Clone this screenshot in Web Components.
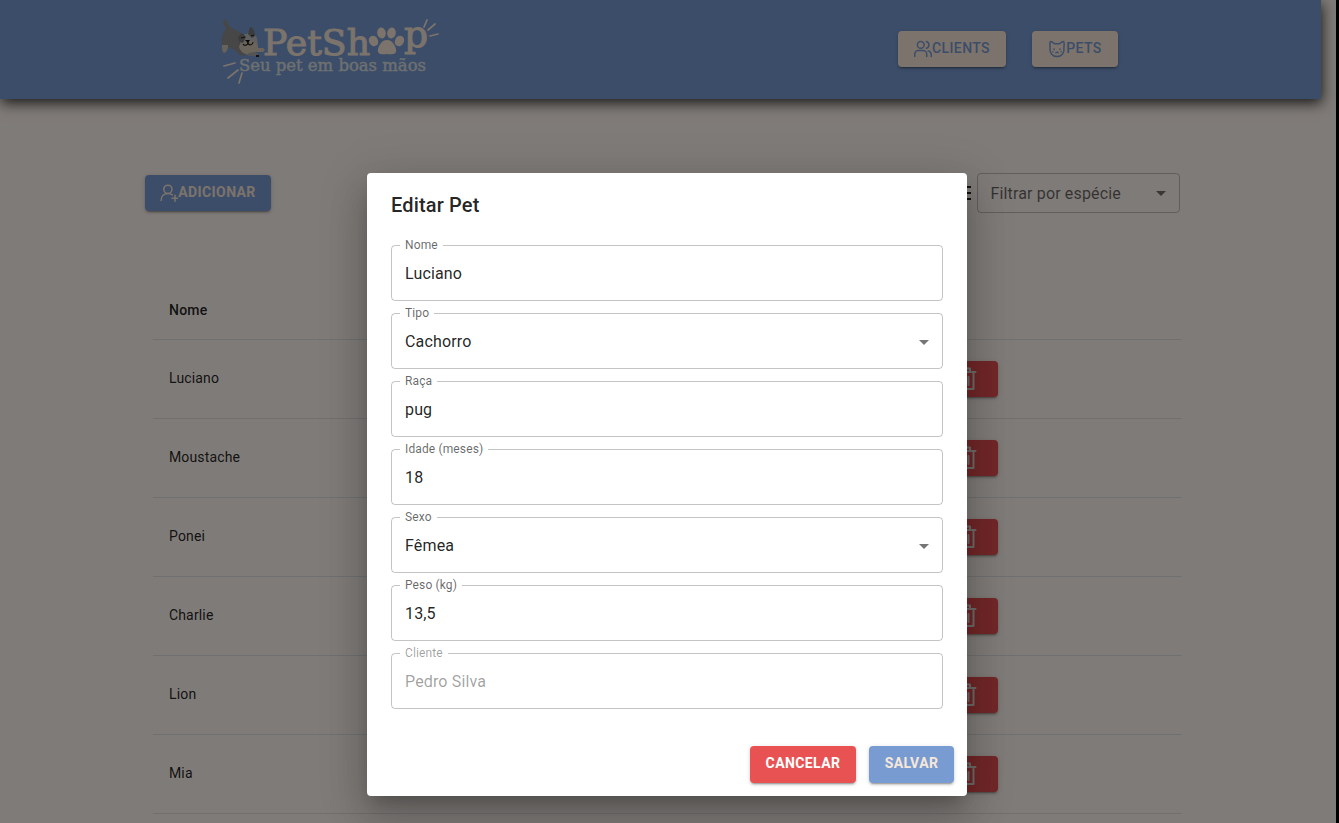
<!DOCTYPE html>
<html lang="pt-BR"><head><meta charset="utf-8"><title>PetShop</title>
<style>
html,body{margin:0;height:100%;overflow:hidden;background:#000}
body{font-family:Roboto,"Open Sans",sans-serif;color:rgba(0,0,0,.87)}
</style></head><body><pet-app></pet-app>
<script>
const define=(name,html)=>customElements.define(name,class extends HTMLElement{
  constructor(){super();const t=document.createElement('template');
    t.innerHTML=typeof html==='function'?html(this):html;
    this.attachShadow({mode:'open'}).append(t.content.cloneNode(true));}
});
const shapes={
 users:'<path d="M1 22v-3a5 5 0 0 1 5-5h6a5 5 0 0 1 5 5v3"/><circle cx="9" cy="6.500" r="4.500"/><path d="M16.500 2a4.700 4.700 0 0 1 0 9M19 14.500a5 5 0 0 1 4 5V22"/>',
 cat:'<path d="M3 2c2.500 0 4 1.500 5.500 3h7C17 3.500 18.500 2 21 2c.8 2 .7 5 .2 8 1.300 7-3 12-9.200 12S1.500 17 2.800 10C2.300 7 2.200 4 3 2Z"/><path d="M8 12v.5M16 12v.5M10.500 17l1.500-1 1.500 1M6.500 15.500h.1M17.500 15.500h.1"/>',
 add:'<circle cx="10.500" cy="7" r="5.500"/><path d="M1.500 22c0-6 4-9.500 9-9.500 2.500 0 4.500.7 6 2M20 15v8M16 19h8"/>',
 trash:'<path d="M2.500 5h19M8 5V1.500h8V5M4.500 5v17h15V5M9.500 10v8M14.500 10v8"/>'
};
define('pet-icon',el=>`<style>:host{display:block;width:var(--s,18px);height:var(--s,18px);flex:none}svg{display:block;width:100%;height:100%;fill:none;stroke:currentColor;stroke-width:var(--w,2);stroke-linecap:round;stroke-linejoin:round}</style><svg viewBox="0 0 24 24">${shapes[el.getAttribute('name')]}</svg>`);
define('pet-button',`<style>:host{display:flex;box-sizing:border-box;height:36px;padding:0 16px;align-items:center;justify-content:center;border-radius:4px;font:var(--fw,500) 14px/34px Roboto,sans-serif;letter-spacing:.4px;background:var(--bg,#789bd2);color:var(--fg,#f6e7d8);box-shadow:0 3px 1px -2px #0003,0 2px 2px #0002,0 1px 5px #0002}span{display:block;margin-top:var(--lift,-2px)}</style><slot name="icon"></slot><span><slot></slot></span>`);
define('pet-logo',`<style>:host{display:block;width:220px;height:70px}svg{display:block;overflow:visible}text{line-height:1}</style>
<svg width="220" height="70" viewBox="220 17 220 70">
<g><path d="M224 20c2-1 4 2 4 4 1 3 4 4 8 6l8 5 4 16-3 5c-5 0-8-3-10-6-4-1-6-3-8-5l-5 2c-1-7 0-14 4-18l-3-6Z" fill="#8e8e8e"/><path d="M222 45h6c0 4-1 7-4 8-2-1-2-4-2-8Z" fill="#d1c4b2"/><path d="M240 39c2-6 14-8 17-1l1 8c-2 8-16 8-18 1Z" fill="#c1c1c0"/><path d="m238 37 4-4 4 4-3 6-4-1Zm10-3 2-7c3 0 5 5 5 9l-3 2Z" fill="#777879"/><path d="M239 47c1-5 5-4 8-6h4c4 0 7 3 7 7-2 9-16 9-19-1Z" fill="#d6c8b5"/><path d="m241 38 4-1m6-1 3-1M248 42c0 4-4 4-5 2m5-1c1 3 5 2 5-1" fill="none" stroke="#222" stroke-width="1.100"/><path d="M245 40h5l-2 3Z" fill="#111"/><path d="M257 48h6l2 2-2 2h-7Z" fill="#d6c8b5"/><path d="m248 53 7-1 3 2v2h-9Z" fill="#aaa9a8"/><path d="M256 56h3" stroke="#222" stroke-width="2"/></g>
<g fill="#f6e7d8" font-family="'DejaVu Serif',serif"><text x="263" y="54.500" font-size="36" textLength="107" lengthAdjust="spacingAndGlyphs" stroke="#f6e7d8" stroke-width="1">PetSh</text><text x="404" y="47" font-size="35" textLength="24" lengthAdjust="spacingAndGlyphs" stroke="#f6e7d8" stroke-width="1">p</text>
<ellipse cx="373.500" cy="41" rx="4.500" ry="5.500" transform="rotate(-28 373.500 41)"/><ellipse cx="381.500" cy="33" rx="4.300" ry="5.500" transform="rotate(-10 381.500 33)"/><ellipse cx="391.500" cy="33" rx="4.300" ry="5.500" transform="rotate(10 391.500 33)"/><ellipse cx="399.500" cy="41" rx="4.500" ry="5.500" transform="rotate(28 399.500 41)"/><path d="M387 40c5 0 8 5 9 9 1 5-3 6-9 5-6 1-10 0-9-5 1-4 4-9 9-9Z"/>
<text x="239" y="70.500" font-size="17.500" textLength="187" lengthAdjust="spacingAndGlyphs" fill="#dce0e3" stroke="#dce0e3" stroke-width=".4">Seu pet em boas mãos</text></g>
<path d="m424 27 3-7M428 30l7-6M430 36l8-2M224 66l11-3M228 78l10-8M239 83l3-10" fill="none" stroke="#f6e7d8" stroke-width="1.700" stroke-linecap="round"/></svg>`);
define('pet-header',`<style>:host{display:flex;box-sizing:border-box;width:1321px;height:99px;padding:17px 203px 0 220px;justify-content:space-between;background:#789bd2;box-shadow:1px 4px 13px #000c}nav{display:flex;gap:26px;padding-top:14px}pet-button{--bg:#f6e7d8;--fg:#789bd2;padding:0}</style><pet-logo></pet-logo><nav><pet-button style="width:108px"><pet-icon slot="icon" name="users"></pet-icon>CLIENTS</pet-button><pet-button style="width:86px"><pet-icon slot="icon" name="cat"></pet-icon>PETS</pet-button></nav>`);
define('pet-arrow',`<style>:host{display:block;width:24px;height:24px;color:#0000008a}svg{display:block}</style><svg width="24" height="24"><path d="m7 10 5 5 5-5Z" fill="currentColor"/></svg>`);
define('pet-toolbar',`<style>:host{display:flex;width:1035px;margin:74px 0 0 145px;justify-content:space-between;height:40px}pet-button{margin-top:2px;--fw:700;width:126px;padding:0}section{display:flex;align-items:center;gap:3px}.filter{box-sizing:border-box;width:203px;height:40px;border:1px solid #0000003b;border-radius:4px;padding:0 6px 0 12.500px;display:flex;align-items:center;justify-content:space-between;color:#0009;font-size:16px;letter-spacing:.15px}</style><pet-button><pet-icon slot="icon" name="add"></pet-icon>ADICIONAR</pet-button><section><svg width="24" height="24"><path d="M3 6h18M3 12h18M3 18h18" stroke="#222" stroke-width="2"/></svg><div class="filter">Filtrar por espécie<pet-arrow></pet-arrow></div></section>`);
define('pet-row',`<style>:host{display:flex;box-sizing:border-box;height:79px;padding:0 184px 0 16px;align-items:center;justify-content:space-between;border-bottom:1px solid #e0e0e0;font-size:14px;letter-spacing:.15px}span{margin-top:-2px}pet-button{width:64px;--bg:#e54f50;--fg:#ddd8d4}pet-icon{--s:24px;--w:2}</style><span><slot></slot></span><pet-button><pet-icon slot="icon" name="trash"></pet-icon></pet-button>`);
define('pet-table',`<style>:host{display:block;width:1029px;margin:67px 0 0 153px}header{box-sizing:border-box;height:60px;padding:18px 16px;border-bottom:1px solid #e0e0e0;font-size:14px;font-weight:500;line-height:24px;letter-spacing:.2px}</style><header>Nome</header>${['Luciano','Moustache','Ponei','Charlie','Lion','Mia'].map(n=>`<pet-row>${n}</pet-row>`).join('')}`);
define('pet-field',el=>`<style>:host{display:block;height:68px}fieldset{box-sizing:border-box;margin:0;height:62px;border:1px solid #0000003b;border-radius:4px;padding:0 6px 0 13px;min-width:0}legend{height:12px;line-height:12px;font-size:12px;letter-spacing:.13px;padding:0 5px;margin-left:-5px;color:#0009}div{height:45px;display:flex;align-items:center;justify-content:space-between;font-size:16px;letter-spacing:.15px}:host([disabled]) div,:host([disabled]) legend{color:#00000061}</style><fieldset><legend>${el.getAttribute('label')}</legend><div><span><slot></slot></span>${el.hasAttribute('select')?'<pet-arrow></pet-arrow>':''}</div></fieldset>`);
define('pet-dialog',`<style>:host{display:block;box-sizing:border-box;width:600px;height:623px;background:#fff;border-radius:4px;padding:16px 24px;box-shadow:0 11px 15px -7px #0003,0 24px 38px 3px #00000024,0 9px 46px 8px #0000001f}h2{margin:0;font-size:20px;line-height:32px;font-weight:500;letter-spacing:.15px}main{height:476px;margin-top:18px}footer{display:flex;justify-content:flex-end;gap:13px;margin:31px -11px 0}pet-button{height:37px;--fw:700;--lift:-4px;padding:0}</style><h2>Editar Pet</h2><main><pet-field label="Nome">Luciano</pet-field><pet-field label="Tipo" select>Cachorro</pet-field><pet-field label="Raça">pug</pet-field><pet-field label="Idade (meses)">18</pet-field><pet-field label="Sexo" select>Fêmea</pet-field><pet-field label="Peso (kg)">13,5</pet-field><pet-field label="Cliente" disabled>Pedro Silva</pet-field></main><footer><pet-button style="width:106px;--bg:#e95252;--fg:#fff">CANCELAR</pet-button><pet-button style="width:85px">SALVAR</pet-button></footer>`);
define('pet-app',`<style>:host{display:block;height:823px;width:1336px;background:#fff6f0;position:relative;overflow:hidden}.overlay{position:absolute;inset:0;background:#00000080;display:flex;justify-content:center;align-items:flex-start;padding:173px 2px 0 0}</style><pet-header></pet-header><pet-toolbar></pet-toolbar><pet-table></pet-table><div class="overlay"><pet-dialog></pet-dialog></div>`);
</script></body></html>
